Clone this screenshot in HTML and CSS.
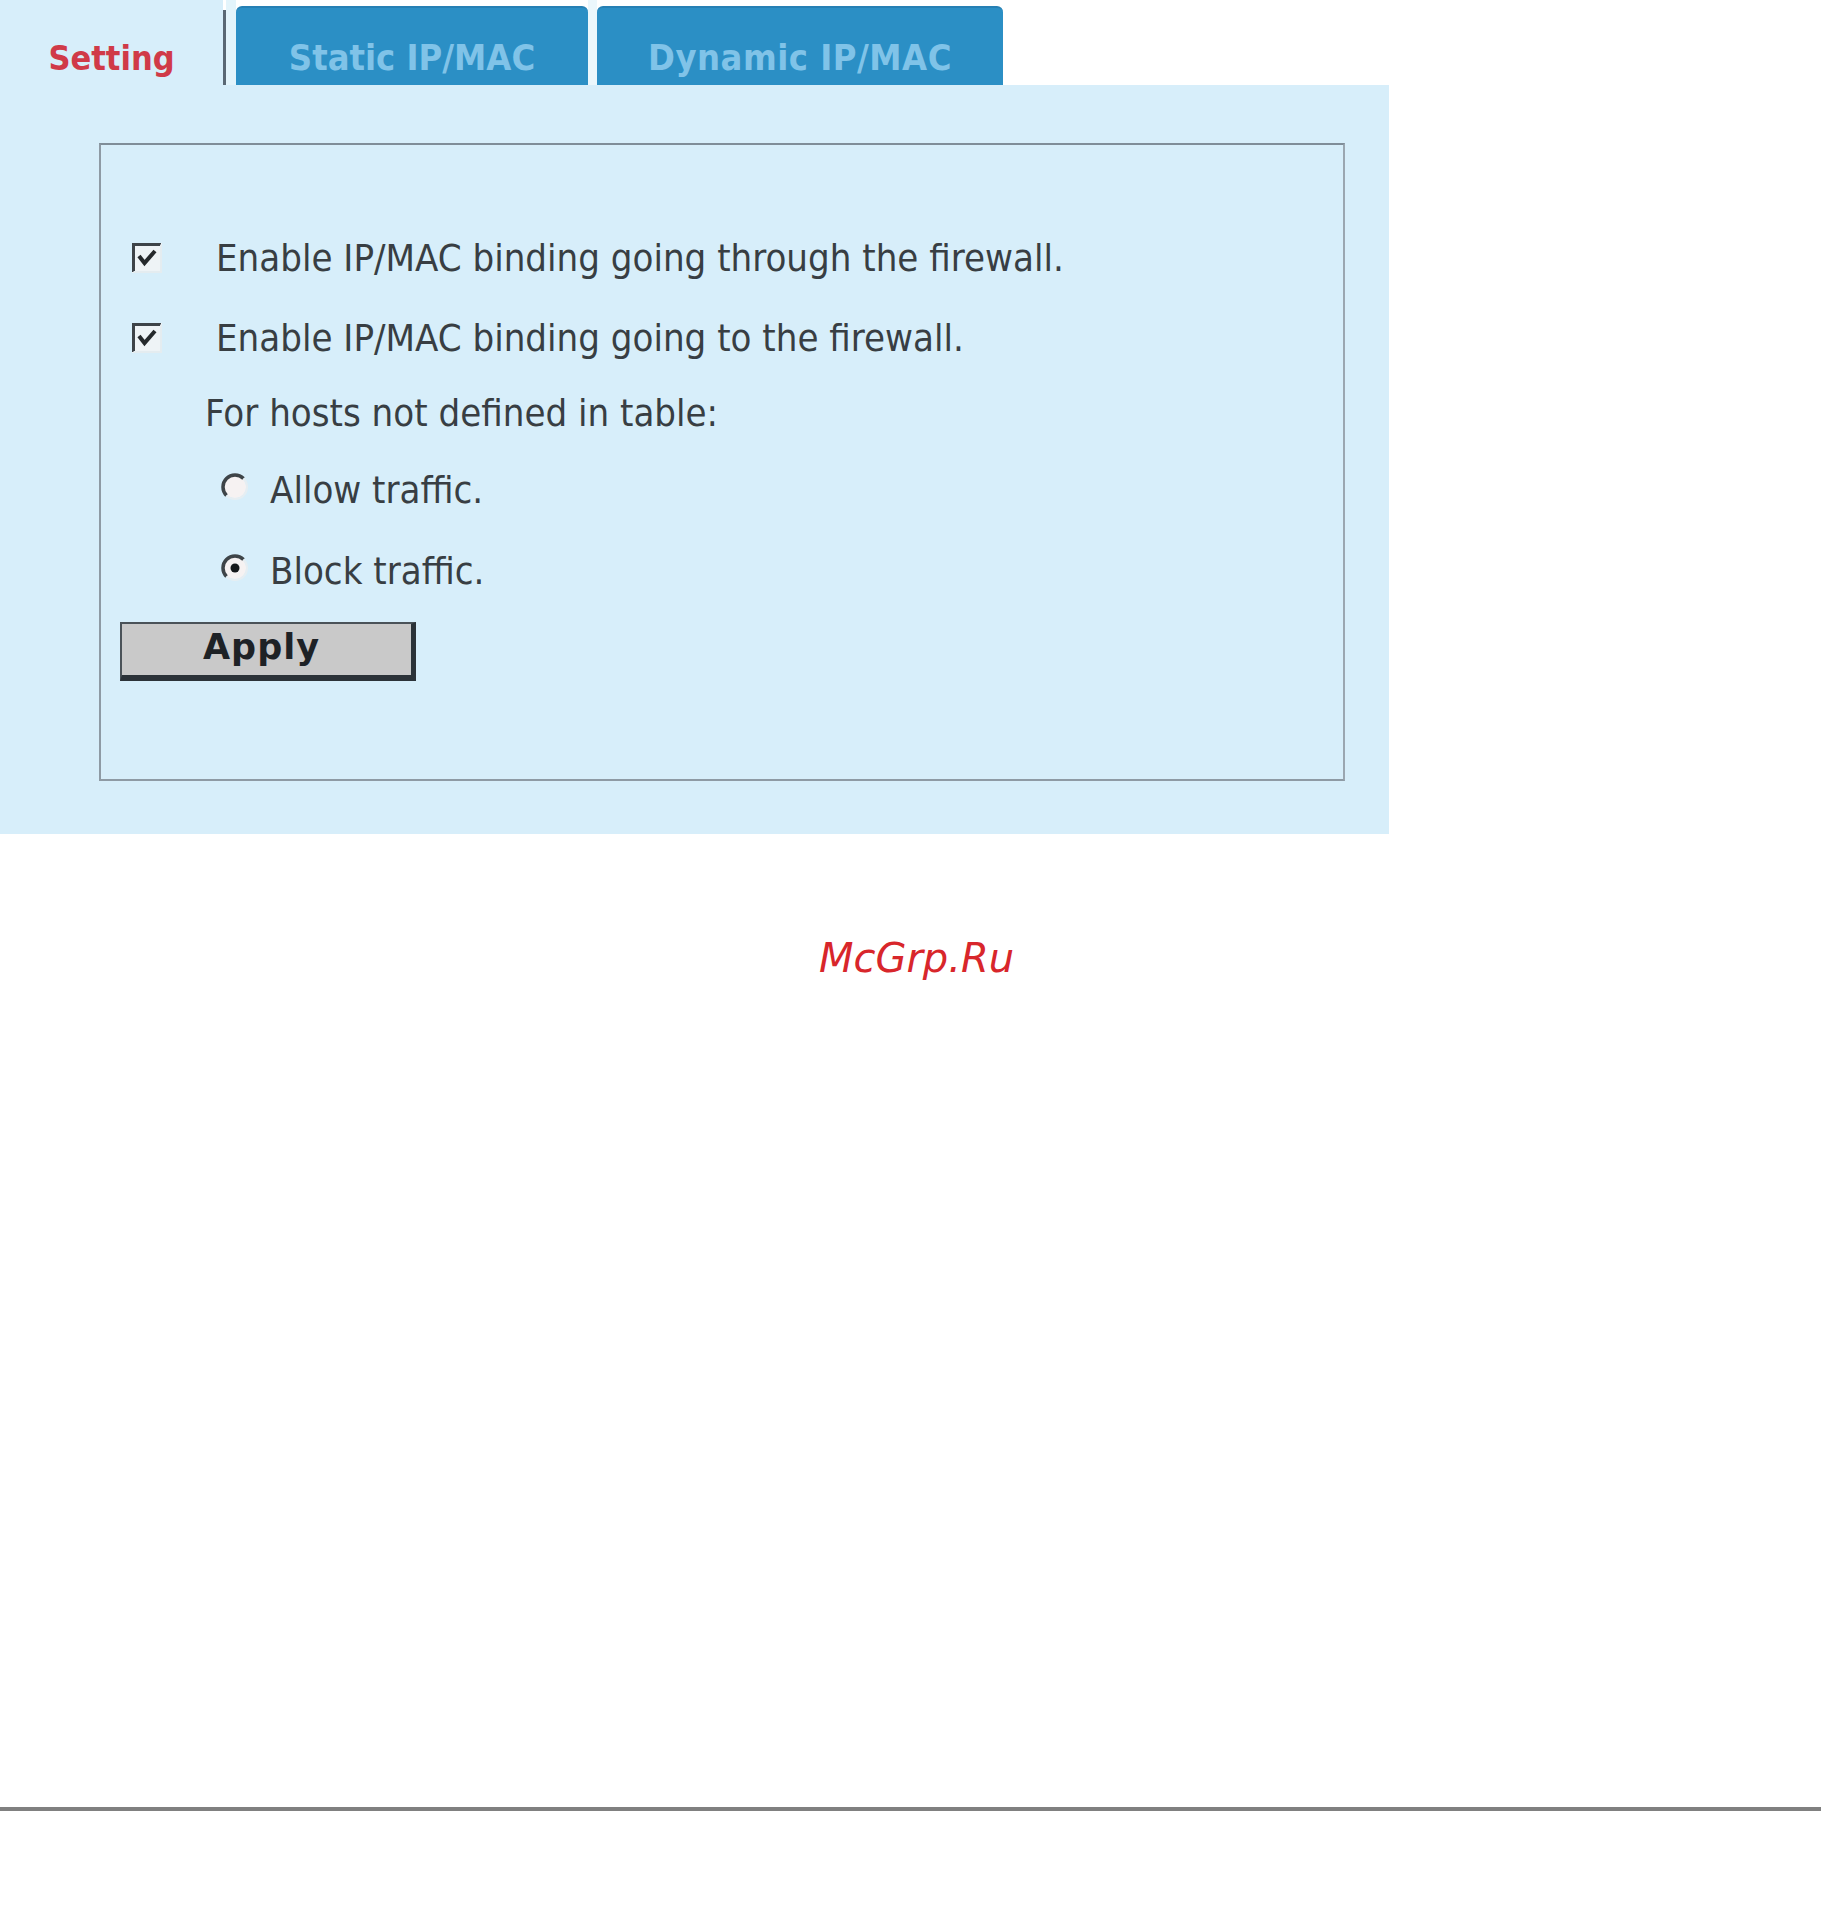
FILE: index.html
```html
<!DOCTYPE html>
<html>
<head>
<meta charset="utf-8">
<link rel="stylesheet" href="styles.css">
</head>
<body>
<div class="page">
  <div class="tabs">
    <div class="tab tab-active">Setting</div>
    <div class="tab-sep"></div>
    <div class="tab-gap"></div>
    <div class="tab tab-static">Static IP/MAC</div>
    <div class="tab-gap2"></div>
    <div class="tab tab-dynamic">Dynamic IP/MAC</div>
  </div>
  <div class="panel">
    <div class="box">
      <div class="row row-check">
        <svg class="chk" width="30" height="30" viewBox="0 0 30 30">
          <rect x="0" y="0" width="30" height="30" fill="#eef3f6"/>
          <path d="M1.5 29 L1.5 1.5 L29 1.5" fill="none" stroke="#3d4348" stroke-width="3"/>
          <path d="M29 1.5 L29 29 L1.5 29" fill="none" stroke="#e4ecf0" stroke-width="2"/>
          <path d="M7 13 L12.5 20 L23 8" fill="none" stroke="#25292c" stroke-width="4"/>
        </svg>
        <span class="label">Enable IP/MAC binding going through the firewall.</span>
      </div>
      <div class="row row-check">
        <svg class="chk" width="30" height="30" viewBox="0 0 30 30">
          <rect x="0" y="0" width="30" height="30" fill="#eef3f6"/>
          <path d="M1.5 29 L1.5 1.5 L29 1.5" fill="none" stroke="#3d4348" stroke-width="3"/>
          <path d="M29 1.5 L29 29 L1.5 29" fill="none" stroke="#e4ecf0" stroke-width="2"/>
          <path d="M7 13 L12.5 20 L23 8" fill="none" stroke="#25292c" stroke-width="4"/>
        </svg>
        <span class="label">Enable IP/MAC binding going to the firewall.</span>
      </div>
      <div class="row row-hosts">
        <span class="label">For hosts not defined in table:</span>
      </div>
      <div class="row row-radio row-radio1">
        <svg class="rad" width="30" height="30" viewBox="0 0 30 30">
          <circle cx="15" cy="15" r="11" fill="#f6f2f2"/>
          <path d="M23.5 6.5 A12 12 0 0 0 6.5 23.5" fill="none" stroke="#3e4448" stroke-width="3.5"/>
          <path d="M6.5 23.5 A12 12 0 0 0 23.5 6.5" fill="none" stroke="#e6eef2" stroke-width="2"/>
        </svg>
        <span class="label">Allow traffic.</span>
      </div>
      <div class="row row-radio">
        <svg class="rad" width="30" height="30" viewBox="0 0 30 30">
          <circle cx="15" cy="15" r="11" fill="#f6f2f2"/>
          <path d="M23.5 6.5 A12 12 0 0 0 6.5 23.5" fill="none" stroke="#3e4448" stroke-width="3.5"/>
          <path d="M6.5 23.5 A12 12 0 0 0 23.5 6.5" fill="none" stroke="#e6eef2" stroke-width="2"/>
          <circle cx="15" cy="15" r="4.5" fill="#15181a"/>
        </svg>
        <span class="label">Block traffic.</span>
      </div>
      <div class="btn-row">
        <button class="apply">Apply</button>
      </div>
    </div>
  </div>
  <div class="watermark">McGrp.Ru</div>
  <div class="rule"></div>
</div>
</body>
</html>
```

FILE: styles.css
```css
html, body {
  margin: 0;
  padding: 0;
  background: #ffffff;
}

.page {
  width: 1821px;
}

.tabs {
  display: flex;
  width: 1389px;
  height: 85px;
}

.tab {
  display: flex;
  align-items: center;
  justify-content: center;
  box-sizing: border-box;
  font-family: "DejaVu Sans Condensed", "DejaVu Sans", sans-serif;
  font-stretch: condensed;
  font-weight: bold;
  font-size: 36px;
  padding-top: 22px;
}

.tab-active {
  width: 223px;
  background: #d7eefa;
  color: #d03a48;
  font-size: 34px;
  padding-top: 30px;
}

.tab-sep {
  width: 3px;
  margin-top: 10px;
  background: #5a6874;
}

.tab-gap {
  width: 10px;
  background: #e3f4fb;
}

.tab-static {
  width: 352px;
  margin-top: 6px;
  background: #2b8fc5;
  color: #80c3e8;
  border-radius: 6px 6px 0 0;
  border-top: 2px solid #2680b4;
}

.tab-gap2 {
  width: 9px;
  background: #ebf7fc;
}

.tab-dynamic {
  width: 406px;
  margin-top: 6px;
  background: #2b8fc5;
  color: #80c3e8;
  border-radius: 6px 6px 0 0;
  border-top: 2px solid #2680b4;
  letter-spacing: 0.5px;
}

.panel {
  width: 1389px;
  height: 749px;
  box-sizing: border-box;
  background: #d7eefa;
  padding: 58px 0 0 99px;
}

.box {
  width: 1246px;
  height: 638px;
  box-sizing: border-box;
  border: 2px solid #8e9aa4;
  border-top-color: #7f8d98;
  border-right-color: #9aa6b0;
  padding-top: 73px;
  display: flex;
  flex-direction: column;
}

.row {
  display: flex;
  align-items: center;
  font-family: "DejaVu Sans Condensed", "DejaVu Sans", sans-serif;
  font-stretch: condensed;
  font-size: 38px;
  color: #383e43;
}

.row-check {
  height: 80px;
  padding-left: 31px;
}

.row-check .chk {
  margin-right: 54px;
  flex: none;
}

.row-hosts {
  height: 70px;
  padding-left: 104px;
}

.row-radio {
  height: 79px;
  padding-left: 119px;
}

.row-radio1 {
  height: 83px;
}

.row-radio .rad {
  margin-right: 20px;
  flex: none;
  margin-top: -6px;
}

.btn-row {
  padding-left: 19px;
  margin-top: 12px;
}

.apply {
  width: 296px;
  height: 59px;
  box-sizing: border-box;
  background: #c9c9c9;
  border-style: solid;
  border-width: 2px 5px 6px 2px;
  border-color: #4a5258 #2b3238 #2b3238 #4a5258;
  font-family: "DejaVu Sans", sans-serif;
  font-weight: bold;
  font-size: 35px;
  color: #1e2226;
  padding: 0 10px 6px 0;
  margin: 0;
  letter-spacing: 1px;
}

.watermark {
  margin-top: 100px;
  height: 48px;
  line-height: 48px;
  text-align: center;
  padding-left: 12px;
  font-family: "DejaVu Sans", sans-serif;
  font-style: italic;
  font-size: 40px;
  color: #d8262b;
}

.rule {
  margin-top: 825px;
  height: 4px;
  background: #808080;
}
```
